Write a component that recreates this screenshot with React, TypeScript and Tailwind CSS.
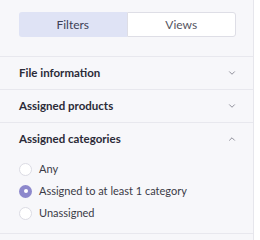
import { ChevronDown, ChevronUp } from "lucide-react"

const Section = ({ title, open }: { title: string; open?: boolean }) => (
    <div className="flex items-center justify-between h-8 pl-[19px] pr-[16px]">
        <span className="text-[11.5px] font-bold text-[#2b2b38]">{title}</span>
        {open ? (
            <ChevronUp size={10} strokeWidth={2.2} className="text-[#858592]" />
        ) : (
            <ChevronDown size={10} strokeWidth={2.2} className="text-[#858592]" />
        )}
    </div>
)

const Radio = ({ label, checked }: { label: string; checked?: boolean }) => (
    <label className="flex items-center gap-[7px] h-[22px]">
        {checked ? (
            <span className="w-[13px] h-[13px] rounded-full bg-[#8d88cc] flex items-center justify-center">
                <span className="w-[4px] h-[4px] rounded-full bg-white" />
            </span>
        ) : (
            <span className="w-[13px] h-[13px] rounded-full bg-white border border-[#dcdce4]" />
        )}
        <span className="text-[11px] text-[#3b3b47]">{label}</span>
    </label>
)

const App = () => {
    return (
        <main className="w-[260px] h-[240px] bg-white flex overflow-hidden" style={{ fontFamily: "Lato, 'Open Sans', sans-serif" }}>
            <div className="w-[254px] h-full bg-[#f7f7fa] border-r border-[#e6e6ec] flex flex-col">
                <div className="pt-[12px] pb-[19px] px-[19px] border-b border-[#e8e8ee]">
                    <div className="flex h-[25px] w-[217px]">
                        <button className="flex-1 bg-[#dfe3f5] rounded-l-[3px] text-[12px] text-[#3d3f55]">Filters</button>
                        <button className="flex-1 bg-white border border-[#dedee6] rounded-r-[3px] text-[12px] text-[#55555f]">Views</button>
                    </div>
                </div>
                <div className="border-b border-[#e8e8ee]">
                    <Section title="File information" />
                </div>
                <div className="border-b border-[#e8e8ee]">
                    <Section title="Assigned products" />
                </div>
                <div className="border-b border-[#e8e8ee] pb-[9px]">
                    <Section title="Assigned categories" open />
                    <div className="flex flex-col pl-[19px] pt-[3px]">
                        <Radio label="Any" />
                        <Radio label="Assigned to at least 1 category" checked />
                        <Radio label="Unassigned" />
                    </div>
                </div>
            </div>
        </main>
    )
}

export default App
